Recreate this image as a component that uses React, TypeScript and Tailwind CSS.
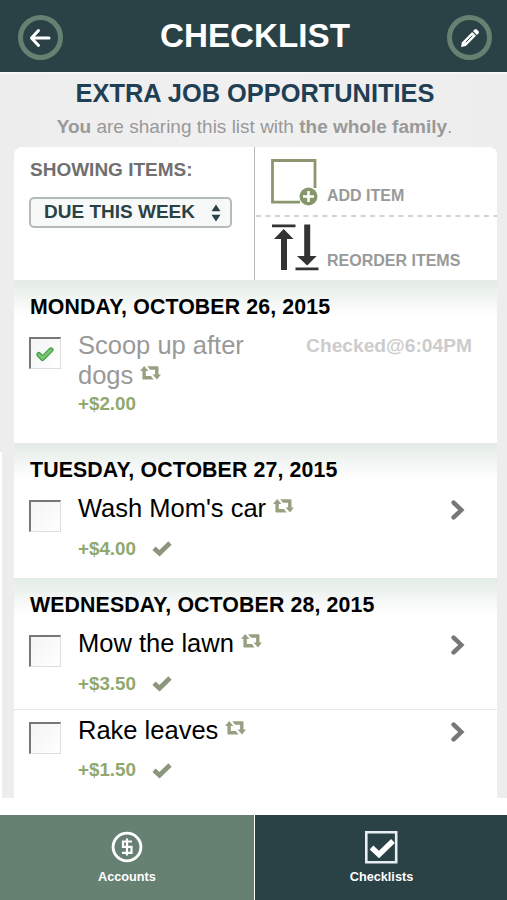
import React from "react";

/**
 * Checklist screen — filter panel, chores grouped by day and the bottom tab bar.
 */

interface Chore {
  title: string;
  reward: string;
  checkedAt?: string;
}

interface Day {
  date: string;
  chores: Chore[];
  height: string;
}

const DAYS: Day[] = [
  {
    date: "MONDAY, OCTOBER 26, 2015",
    chores: [{ title: "Scoop up after dogs", reward: "+$2.00", checkedAt: "6:04PM" }],
    height: "h-[163px]",
  },
  {
    date: "TUESDAY, OCTOBER 27, 2015",
    chores: [{ title: "Wash Mom's car", reward: "+$4.00" }],
    height: "h-[135px]",
  },
  {
    date: "WEDNESDAY, OCTOBER 28, 2015",
    chores: [
      { title: "Mow the lawn", reward: "+$3.50" },
      { title: "Rake leaves", reward: "+$1.50" },
    ],
    height: "h-[220px]",
  },
];

// ─── Icons ────────────────────────────────────────────────────────────────────

function BackIcon() {
  return (
    <svg className="-ml-[2px]" width="22" height="20" viewBox="0 0 22 20" fill="none" stroke="#fff" strokeWidth="3" strokeLinecap="round" strokeLinejoin="round">
      <path d="M9.500 2.500 2.500 10l7 7.500M3 10h17" />
    </svg>
  );
}

function PencilIcon() {
  return (
    <svg width="20" height="20" viewBox="0 0 20 20">
      <path d="M1 19 2 14.200 12.200 3.900 16 7.700 5.800 17.900z" fill="#fff" />
      <path d="M13 3.100 14.600 1.500q1-.9 2.200 0l1.700 1.700q.9 1.100 0 2.200L16.900 7z" fill="#fff" />
      <path d="M5.800 14.200 12.300 7.700" stroke="#2a4245" strokeWidth="1" />
    </svg>
  );
}

function AddItemIcon() {
  return (
    <svg width="48" height="48" viewBox="0 0 48 48" fill="none">
      <path d="M44 29V1.500H1.500V43.200H29" stroke="#8c9770" strokeWidth="2.800" />
      <circle cx="37.500" cy="37.500" r="9" fill="#87956b" />
      <path d="M37.500 32v11M32 37.500h11" stroke="#fff" strokeWidth="2.500" />
    </svg>
  );
}

function ReorderIcon() {
  return (
    <svg width="47" height="47" viewBox="0 0 47 47" fill="#333">
      <path d="M0 .5h23.500v2.800H0zM23.500 43.500h23v2.800h-23z" />
      <path d="M11.700 5 21.500 15H15v31H9V15H2z" />
      <path d="M32.200.5h6V32h6.500l-9.500 9.500L25 32h7.200z" />
    </svg>
  );
}

function RepeatIcon() {
  return (
    <svg className="mb-[4px] ml-[7px] inline-block align-baseline" width="21" height="14" viewBox="0 0 21 14" fill="#97a181">
      <path d="M4.200 0 8.500 5H5.800V10H11L13.600 13.400H3.400Q2.400 13.400 2.400 12.400V5H0z" />
      <path d="M7.200.3H17.500Q18.500.3 18.500 1.300V8.400H21L17 13.400 12.500 8.400H15.100V3.700H10z" />
    </svg>
  );
}

function CheckIcon() {
  return (
    <svg width="20" height="17" viewBox="0 0 20 17" fill="none">
      <path d="M2 8.300 7.500 13.300 18 3" stroke="#8c967c" strokeWidth="4.700" />
    </svg>
  );
}

function ChevronIcon() {
  return (
    <svg width="14" height="20" viewBox="0 0 14 20" fill="none">
      <path d="M2.600 2.600 10.300 10l-7.700 7.400" stroke="#777" strokeWidth="4.500" strokeLinecap="round" />
    </svg>
  );
}

function DollarIcon() {
  return (
    <svg width="32" height="32" viewBox="0 0 32 32" fill="none" stroke="#fff">
      <circle cx="16" cy="16" r="13.900" strokeWidth="2.900" />
      <path d="M21 10.500H12v5.300h8.500v6H11M16 7.500v17" strokeWidth="2.200" />
    </svg>
  );
}

function ChecklistIcon() {
  return (
    <svg width="33" height="33" viewBox="0 0 33 33" fill="none" stroke="#fff">
      <path d="M1.300 1.300H31.200V31.200H1.300z" stroke="#e8eef2" strokeWidth="2.600" />
      <path d="M6.500 16.500 14 23.500 28 10" strokeWidth="5.400" />
    </svg>
  );
}

// ─── Rows ─────────────────────────────────────────────────────────────────────

function Checkbox({ checked }: { checked: boolean }) {
  return (
    <div className="mt-[6px] flex h-8 w-8 shrink-0 items-center justify-center border-t-2 border-r border-b border-l-2 border-t-[#777] border-r-[#ddd] border-b-[#ddd] border-l-[#777] bg-linear-to-br from-[#f4f4f4] to-white">
      {checked && (
        <svg className="-ml-px" width="18" height="16" viewBox="0 0 18 16" fill="none">
          <path d="M2.800 8.500 6.500 12.500 15 3.800" stroke="#419d45" strokeWidth="5" strokeLinecap="round" strokeLinejoin="round" />
          <path d="M2.800 8.500 6.500 12.200 14.800 3.900" stroke="#76c76f" strokeWidth="2.800" strokeLinecap="round" />
        </svg>
      )}
    </div>
  );
}

function ChoreRow({ chore }: { chore: Chore }) {
  const done = Boolean(chore.checkedAt);

  return (
    <div className="flex pl-[15px]">
      <Checkbox checked={done} />
      <div className="ml-[17px] flex-1">
        <div className={`text-[25.5px] leading-[29.5px] ${done ? "w-[180px] text-[#999]" : "whitespace-nowrap text-black"}`}>
          {chore.title}
          <RepeatIcon />
        </div>
        <div className={`flex items-center gap-4 text-[18.8px] leading-6 font-bold text-[#90a86e] ${done ? "mt-[2px]" : "mt-[13px]"}`}>
          {chore.reward}
          {!done && <CheckIcon />}
        </div>
      </div>
      {done ? (
        <div className="mr-[25px] text-[19.2px] leading-[29px] font-bold text-[#ccc]">Checked@{chore.checkedAt}</div>
      ) : (
        <div className="mt-[6px] mr-[32px]">
          <ChevronIcon />
        </div>
      )}
    </div>
  );
}

function DaySection({ day }: { day: Day }) {
  return (
    <section className={`bg-white bg-linear-to-b from-[#e3ebe6] to-white to-[36px] ${day.height}`}>
      <h2 className="mb-[11px] pt-[14px] pl-4 text-[21.3px] leading-[26px] font-bold tracking-[0.13px] text-black">{day.date}</h2>
      {day.chores.map((chore, i) => (
        <div key={chore.title} className={i > 0 ? "mt-[13px] border-t border-[#e6e6e6] pt-[6px]" : ""}>
          <ChoreRow chore={chore} />
        </div>
      ))}
    </section>
  );
}

export default function App() {
  return (
    <div className="flex h-[900px] w-[507px] flex-col overflow-hidden bg-white font-['Liberation_Sans',Arial,sans-serif]">
      <header className="flex h-[72px] shrink-0 items-center justify-between bg-[#2a4245] pt-[3px] pr-[15px] pl-[18px]">
        <div className="flex h-[45px] w-[45px] items-center justify-center rounded-full border-[5px] border-[#668071]">
          <BackIcon />
        </div>
        <h1 className="pb-[3px] text-[33.2px] leading-none font-bold text-white">CHECKLIST</h1>
        <div className="flex h-[45px] w-[45px] items-center justify-center rounded-full border-[5px] border-[#668071]">
          <PencilIcon />
        </div>
      </header>

      <main className="relative h-[726px] shrink-0 border-t-2 border-[#f8f8f8] bg-linear-to-r from-[#ededed] via-[#f0f0f0] to-[#ededed]">
        <div className="absolute top-[378px] bottom-0 left-0 w-[2px] bg-white" />

        <div className="h-[73px] text-center">
          <h2 className="pt-[3px] pl-[3px] text-[25.4px] leading-8 font-bold text-[#1f4054]">EXTRA JOB OPPORTUNITIES</h2>
          <p className="mt-[6px] pl-[2px] text-[19px] leading-6 text-[#999]">
            <b>You</b> are sharing this list with <b>the whole family</b>.
          </p>
        </div>

        <div className="mr-[10px] ml-[14px]">
          {/* Filter + actions */}
          <div className="flex h-[133px] overflow-hidden rounded-t-lg bg-white">
            <div className="w-[240px] pl-[15px]">
              <div className="pt-[11px] pl-px text-[19px] leading-6 font-bold text-[#707070]">SHOWING ITEMS:</div>
              <div className="mt-[15px] flex h-[31px] w-[203px] items-center justify-between rounded-[5px] border-2 border-[#b4b9b9] bg-[#f7f9f9] pr-[9px] pl-[13px]">
                <span className="pb-[2px] text-[19px] leading-6 font-bold text-[#2a4245]">DUE THIS WEEK</span>
                <svg width="10" height="18" viewBox="0 0 10 18" fill="#2a4245">
                  <path d="M5 .5 9.500 7.300H.5zM.5 10.700h9L5 17.500z" />
                </svg>
              </div>
            </div>
            <div className="flex-1 border-l border-[#b4b9b9] text-[16px] font-bold text-[#999]">
              <div className="flex h-[68px] items-start pt-[12px] pl-[16px]">
                <AddItemIcon />
                <span className="mt-[27px] ml-[8px] leading-5">ADD ITEM</span>
              </div>
              <svg className="block" width="242" height="2">
                <path d="M1 1h241" stroke="#c4c4c4" strokeWidth="1.500" strokeDasharray="5 4.500" />
              </svg>
              <div className="flex items-start pt-[7px] pl-[17px]">
                <ReorderIcon />
                <span className="mt-[27px] ml-[8px] leading-5">REORDER ITEMS</span>
              </div>
            </div>
          </div>

          {DAYS.map((day) => (
            <DaySection key={day.date} day={day} />
          ))}
        </div>
      </main>

      <nav className="mt-[17px] flex h-[85px] shrink-0 text-[12.7px] leading-4 font-bold text-white">
        <div className="flex w-[254px] flex-col items-center border-r border-[#667f70] bg-[#668071] pt-4">
          <DollarIcon />
          <span className="mt-[6px] ml-px">Accounts</span>
        </div>
        <div className="ml-[1px] flex flex-1 flex-col items-center bg-[#2a4245] pt-4 pl-px">
          <ChecklistIcon />
          <span className="mt-[5px]">Checklists</span>
        </div>
      </nav>
    </div>
  );
}
